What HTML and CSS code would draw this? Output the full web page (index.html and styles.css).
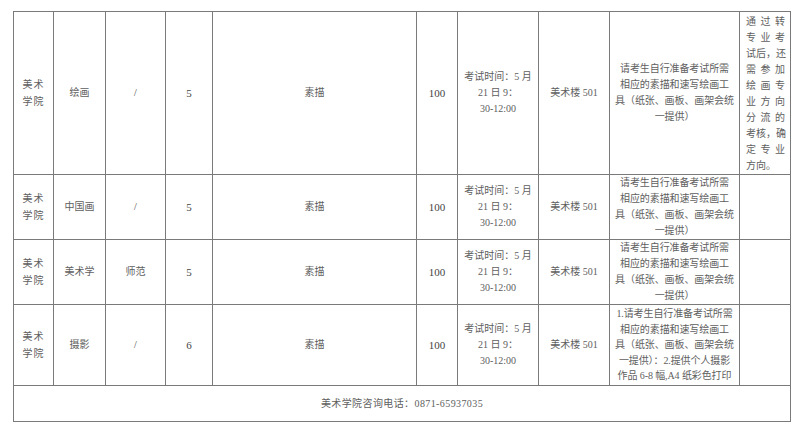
FILE: index.html
```html
<!DOCTYPE html>
<html lang="zh-CN">
<head>
<meta charset="utf-8">
<link rel="stylesheet" href="styles.css">
</head>
<body>
<table class="sheet">
  <colgroup>
    <col class="c1"><col class="c2"><col class="c3"><col class="c4"><col class="c5">
    <col class="c6"><col class="c7"><col class="c8"><col class="c9"><col class="c10">
  </colgroup>
  <tr class="r1">
    <td class="col">美术<br>学院</td>
    <td>绘画</td>
    <td class="slash">/</td>
    <td class="num">5</td>
    <td>素描</td>
    <td class="num">100</td>
    <td class="time">考试时间：5 月<br>21 日 9：<br>30-12:00</td>
    <td>美术楼 501</td>
    <td class="desc">请考生自行准备考试所需<br>相应的素描和速写绘画工<br>具（纸张、画板、画架会统<br>一提供）</td>
    <td class="note">
      <div class="ln"><span>通</span><span>过</span><span>转</span></div>
      <div class="ln"><span>专</span><span>业</span><span>考</span></div>
      <div class="ln"><span>试</span><span>后，</span><span>还</span></div>
      <div class="ln"><span>需</span><span>参</span><span>加</span></div>
      <div class="ln"><span>绘</span><span>画</span><span>专</span></div>
      <div class="ln"><span>业</span><span>方</span><span>向</span></div>
      <div class="ln"><span>分</span><span>流</span><span>的</span></div>
      <div class="ln"><span>考</span><span>核，</span><span>确</span></div>
      <div class="ln"><span>定</span><span>专</span><span>业</span></div>
      <div class="ln start"><span>方向。</span></div>
    </td>
  </tr>
  <tr class="r2">
    <td class="col">美术<br>学院</td>
    <td>中国画</td>
    <td class="slash">/</td>
    <td class="num">5</td>
    <td>素描</td>
    <td class="num">100</td>
    <td class="time">考试时间：5 月<br>21 日 9：<br>30-12:00</td>
    <td>美术楼 501</td>
    <td class="desc">请考生自行准备考试所需<br>相应的素描和速写绘画工<br>具（纸张、画板、画架会统<br>一提供）</td>
    <td></td>
  </tr>
  <tr class="r3">
    <td class="col">美术<br>学院</td>
    <td>美术学</td>
    <td>师范</td>
    <td class="num">5</td>
    <td>素描</td>
    <td class="num">100</td>
    <td class="time">考试时间：5 月<br>21 日 9：<br>30-12:00</td>
    <td>美术楼 501</td>
    <td class="desc">请考生自行准备考试所需<br>相应的素描和速写绘画工<br>具（纸张、画板、画架会统<br>一提供）</td>
    <td></td>
  </tr>
  <tr class="r4">
    <td class="col">美术<br>学院</td>
    <td>摄影</td>
    <td class="slash">/</td>
    <td class="num">6</td>
    <td>素描</td>
    <td class="num">100</td>
    <td class="time">考试时间：5 月<br>21 日 9：<br>30-12:00</td>
    <td>美术楼 501</td>
    <td class="desc tight">1.请考生自行准备考试所需<br>相应的素描和速写绘画工<br>具（纸张、画板、画架会统<br>一提供）：2.提供个人摄影<br>作品 6-8 幅,A4 纸彩色打印</td>
    <td></td>
  </tr>
  <tr class="r5">
    <td colspan="10" class="foot">美术学院咨询电话：0871-65937035</td>
  </tr>
</table>
</body>
</html>
```
FILE: styles.css
```css
html, body {
  margin: 0;
  padding: 0;
  background: #ffffff;
}
body {
  padding: 11px 0 0 13px;
}
.sheet {
  border-collapse: collapse;
  table-layout: fixed;
  width: 777px;
  font-family: "Liberation Serif", "Noto Sans CJK SC", serif;
  font-size: 10px;
  color: #5e5e5e;
}
.c1 { width: 40px; }
.c2 { width: 52px; }
.c3 { width: 60px; }
.c4 { width: 47px; }
.c5 { width: 204px; }
.c6 { width: 41px; }
.c7 { width: 81px; }
.c8 { width: 71px; }
.c9 { width: 130px; }
.c10 { width: 51px; }
.sheet td {
  border: 1px solid #7a7a7a;
  padding: 0;
  text-align: center;
  vertical-align: middle;
  line-height: 16px;
  white-space: nowrap;
  overflow: hidden;
}
.r1 { height: 161px; }
.r2 { height: 65px; }
.r3 { height: 65px; }
.r4 { height: 81px; }
.r5 { height: 36px; }
.sheet td.col {
  line-height: 17px;
  letter-spacing: 1px;
}
.sheet td.num {
  font-size: 11px;
  color: #444444;
}
.sheet td.slash {
  color: #444444;
}
.sheet td.desc {
  line-height: 15.8px;
  letter-spacing: -0.1px;
}
.sheet td.desc.tight {
  line-height: 15.4px;
}
.sheet td.note {
  vertical-align: top;
  padding: 2px 5px 0 6px;
  line-height: 16px;
}
.ln {
  display: flex;
  justify-content: space-between;
}
.ln.start {
  justify-content: flex-start;
}
.sheet td.foot {
  letter-spacing: 0.4px;
}
```
